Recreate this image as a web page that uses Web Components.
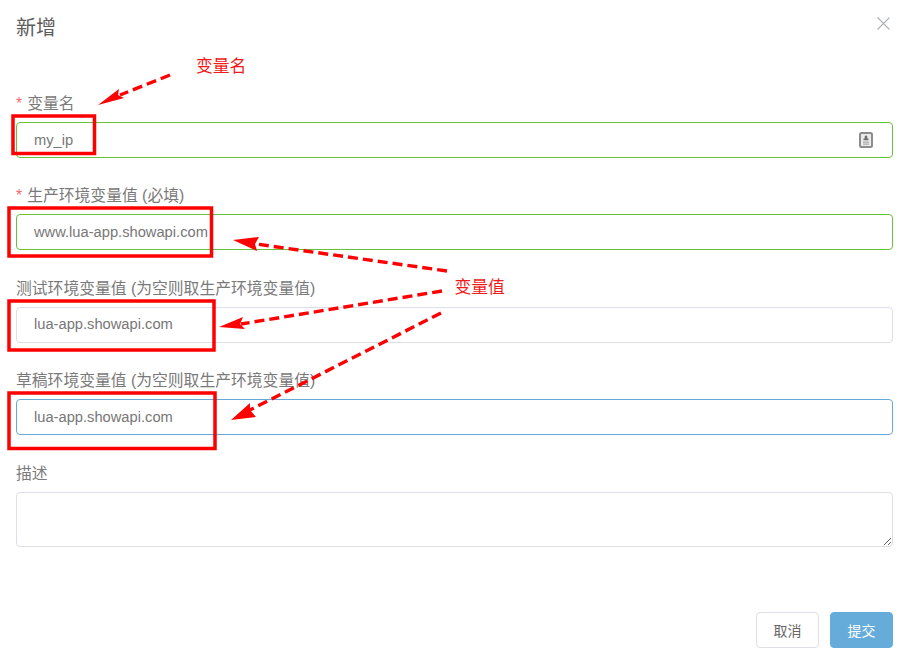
<!DOCTYPE html>
<html>
<head>
<meta charset="utf-8">
<style>
  html, body { margin: 0; padding: 0; background: #fff; }
  body { font-family: "Liberation Sans", "Noto Sans CJK SC", sans-serif; width: 904px; height: 664px; overflow: hidden; }
</style>
</head>
<body>
<edit-dialog title-text="新增">
  <form-field label="变量名" required>
    <text-box state="success" icon>my_ip</text-box>
  </form-field>
  <form-field label="生产环境变量值 (必填)" required>
    <text-box state="success">www.lua-app.showapi.com</text-box>
  </form-field>
  <form-field label="测试环境变量值 (为空则取生产环境变量值)">
    <text-box>lua-app.showapi.com</text-box>
  </form-field>
  <form-field label="草稿环境变量值 (为空则取生产环境变量值)">
    <text-box state="focus">lua-app.showapi.com</text-box>
  </form-field>
  <form-field label="描述">
    <text-area-box></text-area-box>
  </form-field>
  <dialog-button slot="footer">取消</dialog-button>
  <dialog-button slot="footer" primary>提交</dialog-button>
</edit-dialog>
<red-notes></red-notes>

<script>
class EditDialog extends HTMLElement {
  constructor() {
    super();
    let shadow = this.attachShadow({mode: 'open'});
    shadow.innerHTML = `
      <style>
        :host { display: flex; flex-direction: column; width: 904px; height: 664px; box-sizing: border-box; padding: 0 11px 16px 16px; color: #606266; }
        header { display: flex; justify-content: space-between; align-items: center; height: 54px; flex: none; }
        h1 { margin: 0; font-size: 20px; font-weight: 400; color: #5c5c5c; line-height: 54px; padding-top: 2px; }
        svg { display: block; margin-right: 3px; margin-top: -8px; }
        main { flex: none; margin-top: 38px; }
        footer { margin-top: auto; display: flex; justify-content: flex-end; gap: 11px; }
      </style>
      <header>
        <h1></h1>
        <svg width="13" height="13" viewBox="0 0 13 13"><path d="M.5.5l12 12M12.5.5l-12 12" stroke="#aeb1b6" stroke-width="1.1" fill="none"/></svg>
      </header>
      <main><slot></slot></main>
      <footer><slot name="footer"></slot></footer>
    `;
    shadow.querySelector("h1").textContent = this.getAttribute("title-text");
  }
}

class FormField extends HTMLElement {
  constructor() {
    super();
    let shadow = this.attachShadow({mode: 'open'});
    shadow.innerHTML = `
      <style>
        :host { display: block; height: 92.4px; }
        label { display: block; height: 30px; font-size: 15.8px; line-height: 24px; color: #7a7a7a; white-space: nowrap; }
        i { font-style: normal; color: #f56c6c; margin-right: 5px; }
      </style>
      <label></label>
      <slot></slot>
    `;
    let label = shadow.querySelector("label");
    if (this.hasAttribute("required")) {
      let star = document.createElement("i");
      star.textContent = "*";
      label.append(star);
    }
    label.append(this.getAttribute("label"));
  }
}

class TextBox extends HTMLElement {
  constructor() {
    super();
    let shadow = this.attachShadow({mode: 'open'});
    shadow.innerHTML = `
      <style>
        :host { display: flex; align-items: center; justify-content: space-between; box-sizing: border-box; width: 877px; height: 36px; padding: 0 18px 1px 17px; border: 1px solid #dcdfe6; border-radius: 4px; font-size: 14.7px; color: #777; }
        :host([state=success]) { border-color: #67c23a; }
        :host([state=focus]) { border-color: #66a9d9; }
        svg { display: none; margin-right: 1px; margin-top: 1px; }
        :host([icon]) svg { display: block; }
      </style>
      <span><slot></slot></span>
      <svg width="14" height="16" viewBox="0 0 14 16">
        <rect x="1" y="1" width="12" height="14" rx="1.5" fill="#ececec" stroke="#8c8c8c" stroke-width="2"/>
        <path d="M7 3.500a1.300 1.300 0 0 1 1.300 1.300v1.800H9.500v1.700H4.500V6.600h1.200V4.800A1.300 1.300 0 0 1 7 3.500z" fill="#6e6e6e"/>
        <rect x="4" y="9.500" width="6" height="1.200" fill="#aaa"/>
        <rect x="4" y="11.500" width="6" height="1.200" fill="#aaa"/>
      </svg>
    `;
  }
}

class TextAreaBox extends HTMLElement {
  constructor() {
    super();
    let shadow = this.attachShadow({mode: 'open'});
    shadow.innerHTML = `
      <style>
        :host { display: block; width: 877px; height: 55px; }
        textarea { display: block; box-sizing: border-box; width: 100%; height: 100%; margin: 0; padding: 5px 18px; border: 1px solid #dcdfe6; border-radius: 4px; outline: none; background: #fff; }
      </style>
      <textarea></textarea>
    `;
  }
}

class DialogButton extends HTMLElement {
  constructor() {
    super();
    let shadow = this.attachShadow({mode: 'open'});
    shadow.innerHTML = `
      <style>
        :host { display: flex; align-items: center; justify-content: center; box-sizing: border-box; width: 63px; height: 36px; border: 1px solid #dcdfe6; border-radius: 4px; font-size: 14px; color: #666; background: #fff; }
        :host([primary]) { border-color: #66acdb; background: #66acdb; color: #fff; }
      </style>
      <slot></slot>
    `;
  }
}

// the red marks someone drew over the screenshot
class RedNotes extends HTMLElement {
  constructor() {
    super();
    let shadow = this.attachShadow({mode: 'open'});
    shadow.innerHTML = `
      <style>
        :host { position: absolute; left: 0; top: 0; width: 904px; height: 664px; pointer-events: none; color: #f01c1c; font-size: 16.8px; }
        svg { position: absolute; left: 0; top: 0; }
        span { position: absolute; line-height: 20px; white-space: nowrap; }
        rect { fill: none; stroke: #f00; stroke-width: 3.5; }
        line { stroke: #f00; stroke-width: 3.4; stroke-dasharray: 10 5; }
        polygon { fill: #f00; }
      </style>
      <svg width="904" height="664">
        <rect x="13" y="116" width="81.500" height="37.500"/>
        <rect x="9" y="208" width="202.500" height="48"/>
        <rect x="9" y="301" width="205" height="49"/>
        <rect x="9" y="393" width="206" height="55.500"/>

        <line x1="170" y1="75" x2="120" y2="95"/>
        <polygon points="98,105 119,89 118,95 124,98"/>

        <line x1="447" y1="271" x2="256" y2="244"/>
        <polygon points="233,240 259,237 255,244 257,251"/>

        <line x1="442" y1="291" x2="241" y2="324"/>
        <polygon points="219,327 243,317 240,324 245,329"/>

        <line x1="441" y1="313" x2="250" y2="410"/>
        <polygon points="231,420 250,403 250,410 256,417"/>
      </svg>
      <span style="left:196px;top:57px">变量名</span>
      <span style="left:454.500px;top:278px">变量值</span>
    `;
  }
}

customElements.define('edit-dialog', EditDialog);
customElements.define('form-field', FormField);
customElements.define('text-box', TextBox);
customElements.define('text-area-box', TextAreaBox);
customElements.define('dialog-button', DialogButton);
customElements.define('red-notes', RedNotes);
</script>
</body>
</html>
